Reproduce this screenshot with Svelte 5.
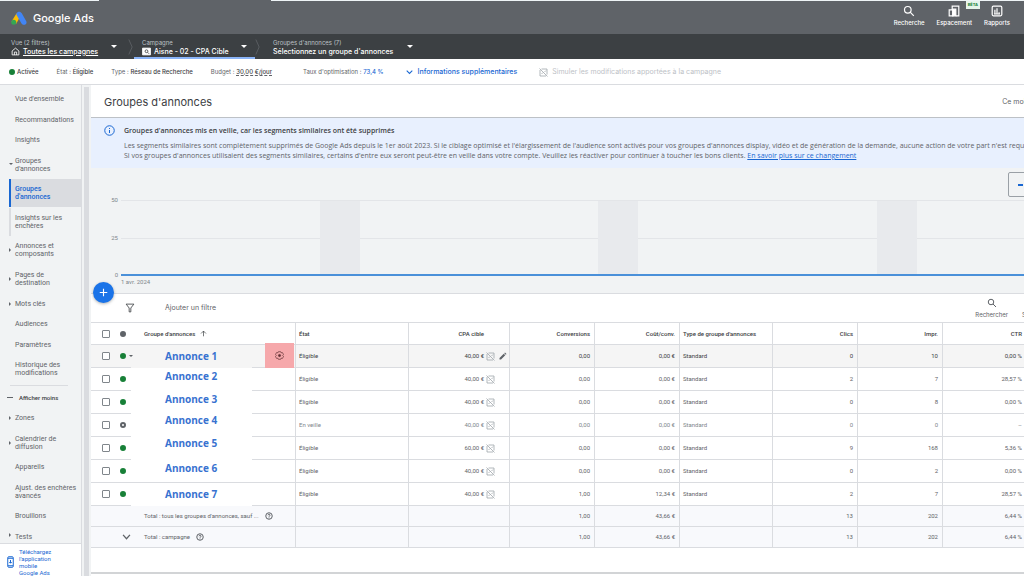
<script>
  let rows = $state([
    { name: "Annonce 1", state: "Éligible", cpa: "40,00 €", conv: "0,00", cost: "0,00 €", clicks: "0", impr: "10", ctr: "0,00 %", align: "mid", checked: false },
    { name: "Annonce 2", state: "Éligible", cpa: "40,00 €", conv: "0,00", cost: "0,00 €", clicks: "2", impr: "7", ctr: "28,57 %", align: "top", checked: false },
    { name: "Annonce 3", state: "Éligible", cpa: "40,00 €", conv: "0,00", cost: "0,00 €", clicks: "0", impr: "8", ctr: "0,00 %", align: "top", checked: false },
    { name: "Annonce 4", state: "En veille", cpa: "40,00 €", conv: "0,00", cost: "0,00 €", clicks: "0", impr: "0", ctr: "–", align: "high", checked: false },
    { name: "Annonce 5", state: "Éligible", cpa: "60,00 €", conv: "0,00", cost: "0,00 €", clicks: "9", impr: "168", ctr: "5,36 %", align: "high", checked: false },
    { name: "Annonce 6", state: "Éligible", cpa: "40,00 €", conv: "0,00", cost: "0,00 €", clicks: "0", impr: "2", ctr: "0,00 %", align: "top", checked: false },
    { name: "Annonce 7", state: "Éligible", cpa: "40,00 €", conv: "1,00", cost: "12,34 €", clicks: "2", impr: "7", ctr: "28,57 %", align: "mid", checked: false },
  ]);

  const totals = [
    { label: "Total : tous les groupes d'annonces, sauf ...", chevron: false },
    { label: "Total : campagne", chevron: true },
  ];

  const menu = [
    { label: ["Vue d'ensemble"] },
    { label: ["Recommandations"] },
    { label: ["Insights"] },
    { label: ["Groupes", "d'annonces"], arrow: "down" },
    { label: ["Groupes", "d'annonces"], sub: true, active: true },
    { label: ["Insights sur les", "enchères"], sub: true },
    { label: ["Annonces et", "composants"], arrow: "right" },
    { label: ["Pages de", "destination"], arrow: "right" },
    { label: ["Mots clés"], arrow: "right" },
    { label: ["Audiences"] },
    { label: ["Paramètres"] },
    { label: ["Historique des", "modifications"] },
    { label: ["Afficher moins"], less: true },
    { label: ["Zones"], arrow: "right" },
    { label: ["Calendrier de", "diffusion"], arrow: "right" },
    { label: ["Appareils"] },
    { label: ["Ajust. des enchères", "avancés"] },
    { label: ["Brouillons"] },
    { label: ["Tests"], arrow: "right" },
  ];

  // widths of the plain and shaded (weekend) parts of the plot
  const bands = [199, 40, 238, 40, 239, 40, 107];

  let allChecked = $state(false);

  function toggleAll() {
    rows.forEach((row) => {
      row.checked = allChecked;
    });
  }
</script>

{#snippet simulator()}
  <svg class="sim" viewBox="0 0 18 18" aria-hidden="true">
    <path d="M5 2h11v11M2 4v12h12M1 1l16 16M5 12l3-3M11 8l3-3" />
  </svg>
{/snippet}

{#snippet loupe()}
  <svg class="loupe" viewBox="0 0 20 20" aria-hidden="true">
    <circle cx="8" cy="8" r="5.5" />
    <path d="M12 12l6 6" />
  </svg>
{/snippet}

{#snippet help()}
  <svg class="help" viewBox="0 0 16 16" aria-hidden="true">
    <circle cx="8" cy="8" r="6.5" />
    <path d="M6 6.5c0-2.700 4-2.700 4 0 0 1.500-2 1.500-2 3M8 11v1.500" />
  </svg>
{/snippet}

<div class="app">
  <div class="strip"><span></span></div>
  <header>
    <a class="logo" href="#home">
      <svg viewBox="0 0 32 28" aria-hidden="true">
        <path d="M11 5l8 5-9 16-9-5z" fill="#fbbc04" />
        <path d="M11 4.500c2-4 8-4.500 10.500 0l9 16c3 6-6 10-9.500 4.500l-9-15.500c-1-1.500-1.500-3.500-1-5z" fill="#4285f4" />
        <circle cx="5.500" cy="22.500" r="5" fill="#34a853" />
      </svg>
      <span>Google Ads</span>
    </a>
    <div class="tools">
      <button>
        {@render loupe()}
        Recherche
      </button>
      <button class="with-badge">
        <svg viewBox="0 0 20 20" aria-hidden="true">
          <path d="M7 7V2h11v16h-5M2 8h6v10H2z" />
          <path d="M8 7h5v11H8z" fill="#fff" />
        </svg>
        Espacement
        <span class="badge">BÊTA</span>
      </button>
      <button>
        <svg viewBox="0 0 20 20" aria-hidden="true">
          <rect x="2" y="2" width="16" height="16" rx="2" />
          <path d="M6.500 15V8M10 15V5.500M13.500 15v-3M5 15h10" />
        </svg>
        Rapports
      </button>
    </div>
  </header>

  <nav class="crumbs">
    <a class="crumb first" href="#vue">
      <span class="small">Vue (2 filtres)</span>
      <span class="big">
        <svg viewBox="0 0 16 16" aria-hidden="true"><path d="M2 7l6-5 6 5v7H2zM6 14V9h4v5" /></svg>
        <u>Toutes les campagnes</u>
      </span>
      <i class="caret"></i>
    </a>
    <svg class="sep" viewBox="0 0 6 20" aria-hidden="true"><path d="M1 1l4 9-4 9" /></svg>
    <a class="crumb current" href="#campagne">
      <span class="small">Campagne</span>
      <span class="big">
        <svg viewBox="0 0 16 16" aria-hidden="true"><path d="M1 2h14v12H1z" fill="#fff" /><g stroke="#3c4043"><circle cx="8" cy="7.500" r="2.500" /><path d="M10 9.500l2.500 2.500" /></g></svg>
        Aisne - 02 - CPA Cible
      </span>
      <i class="caret"></i>
    </a>
    <svg class="sep" viewBox="0 0 6 20" aria-hidden="true"><path d="M1 1l4 9-4 9" /></svg>
    <a class="crumb last" href="#groupes">
      <span class="small">Groupes d'annonces (7)</span>
      <span class="big">Sélectionnez un groupe d'annonces</span>
      <i class="caret"></i>
    </a>
  </nav>

  <div class="status">
    <span class="enabled"><i class="dot on"></i>Activée</span>
    <span>État : <b>Éligible</b></span>
    <span>Type : <b>Réseau de Recherche</b></span>
    <span>Budget : <b class="dashed">30,00 €/jour</b></span>
    <span class="optim">Taux d'optimisation : <a href="#optimisation">73,4 %</a></span>
    <button class="more">
      <svg viewBox="0 0 10 8" aria-hidden="true"><path d="M1 2l4 4 4-4" /></svg>
      Informations supplémentaires
    </button>
    <button class="simulate" disabled>
      {@render simulator()}
      Simuler les modifications apportées à la campagne
    </button>
  </div>

  <div class="body">
    <aside>
      <nav class="menu">
        {#each menu as item}
          {#if item.less}
            <hr />
          {/if}
          <a href="#menu" class:sub={item.sub} class:active={item.active} class:less={item.less}>
            {#if item.less}
              <i class="minus"></i>
            {:else if item.arrow}
              <i class="arrow {item.arrow}"></i>
            {/if}
            <span>
              {#each item.label as line, i}{#if i > 0}<br />{/if}{line}{/each}
            </span>
          </a>
        {/each}
      </nav>
      <a class="download" href="#mobile">
        <svg viewBox="0 0 14 24" aria-hidden="true">
          <rect x="1.500" y="1.500" width="11" height="21" rx="2" />
          <path d="M2 4.500h10M2 19.500h10M7 8v6M4.500 12L7 14.500 9.500 12" />
        </svg>
        <span>Téléchargez<br />l'application<br />mobile<br />Google Ads</span>
      </a>
    </aside>
    <div class="gutter"></div>

    <main>
      <div class="title">
        <h1>Groupes d'annonces</h1>
        <button class="period">Ce mois-ci</button>
      </div>

      <section class="notice">
        <svg viewBox="0 0 22 22" aria-hidden="true">
          <circle cx="11" cy="11" r="9.500" />
          <path d="M11 10v6M11 6v2" />
        </svg>
        <div>
          <h2>Groupes d'annonces mis en veille, car les segments similaires ont été supprimés</h2>
          <p>Les segments similaires sont complètement supprimés de Google Ads depuis le 1er août 2023. Si le ciblage optimisé et l'élargissement de l'audience sont activés pour vos groupes d'annonces display, vidéo et de génération de la demande, aucune action de votre part n'est requise.</p>
          <p>Si vos groupes d'annonces utilisaient des segments similaires, certains d'entre eux seront peut-être en veille dans votre compte. Veuillez les réactiver pour continuer à toucher les bons clients. <a href="#changement">En savoir plus sur ce changement</a></p>
        </div>
      </section>

      <section class="chart">
        <div class="chart-head">
          <button aria-label="Réduire le graphique"><i></i></button>
        </div>
        <div class="chart-body">
          <div class="axis"><span>50</span><span>25</span><span>0</span></div>
          <div class="plot">
            {#each bands as width, i}
              <div class:shade={i % 2 === 1} style="flex-grow: {width}"></div>
            {/each}
          </div>
        </div>
        <div class="date">1 avr. 2024</div>
        <button class="add" aria-label="Ajouter">
          <svg viewBox="0 0 12 12" aria-hidden="true"><path d="M6 1v10M1 6h10" /></svg>
        </button>
      </section>

      <div class="filters">
        <button class="add-filter">
          <svg viewBox="0 0 18 18" aria-hidden="true"><path d="M2 2h14l-5.500 7v7h-3V9z" /></svg>
          Ajouter un filtre
        </button>
        <button class="find">
          {@render loupe()}
          Rechercher
        </button>
        <button class="segment">Segmenter</button>
      </div>

      <table>
        <colgroup>
          <col class="c-check" /><col class="c-dot" /><col class="c-name" /><col class="c-gear" />
          <col class="c-state" /><col class="c-cpa" /><col class="c-num" /><col class="c-num" />
          <col class="c-type" /><col class="c-num" /><col class="c-num" /><col class="c-ctr" />
        </colgroup>
        <thead>
          <tr>
            <th class="check"><input type="checkbox" aria-label="Tout sélectionner" bind:checked={allChecked} onchange={toggleAll} /></th>
            <th class="mark"><i class="dot all"></i></th>
            <th class="name" colspan="2">
              Groupe d'annonces
              <svg viewBox="0 0 10 10" aria-hidden="true"><path d="M5 9V1.500M1.500 5L5 1.500 8.500 5" /></svg>
            </th>
            <th class="line">État</th>
            <th class="line num cpa">CPA cible</th>
            <th class="line num">Conversions</th>
            <th class="line num">Coût/conv.</th>
            <th class="line">Type de groupe d'annonces</th>
            <th class="line num">Clics</th>
            <th class="line num">Impr.</th>
            <th class="line num ctr">CTR</th>
          </tr>
        </thead>
        <tbody>
          {#each rows as row, i}
            <tr class:hover={i === 0} class:paused={row.state === "En veille"}>
              <td class="check"><input type="checkbox" aria-label={row.name} bind:checked={row.checked} /></td>
              <td class="mark">
                <i class="dot" class:on={row.state === "Éligible"}></i>
                {#if i === 0}<i class="open"></i>{/if}
              </td>
              <td class="name {row.align}" class:ruled={i === 5}><a href="#annonce">{row.name}</a></td>
              <td class="gear">
                {#if i === 0}
                  <button aria-label="Paramètres du groupe">
                    <svg viewBox="0 0 20 20" aria-hidden="true">
                      <path d="M7.500 1.500h5l1 2.500 3-.500 2.500 4.500-2 2 2 2-2.500 4.500-3-.500-1 2.500h-5l-1-2.500-3 .500L1 12l2-2-2-2 2.500-4.500 3 .500z" />
                      <circle cx="10" cy="10" r="2.500" fill="#5f2f33" />
                    </svg>
                  </button>
                {/if}
              </td>
              <td class="line">{row.state}</td>
              <td class="line num cpa">
                <span>{row.cpa}{@render simulator()}</span>
                {#if i === 0}
                  <svg class="pencil" viewBox="0 0 16 16" aria-hidden="true"><path d="M1 12l8.500-8.500 3 3L4 15H1zM10.500 2.500L12 1l3 3-1.500 1.500z" /></svg>
                {/if}
              </td>
              <td class="line num">{row.conv}</td>
              <td class="line num">{row.cost}</td>
              <td class="line">Standard</td>
              <td class="line num">{row.clicks}</td>
              <td class="line num">{row.impr}</td>
              <td class="line num ctr">{row.ctr}</td>
            </tr>
          {/each}
        </tbody>
        <tfoot>
          {#each totals as total}
            <tr>
              <td></td>
              <td class="mark">
                {#if total.chevron}
                  <svg class="chevron" viewBox="0 0 10 7" aria-hidden="true"><path d="M1 1l4 4.500L9 1" /></svg>
                {/if}
              </td>
              <td class="name" colspan="2">{total.label} {@render help()}</td>
              <td class="line"></td>
              <td class="line"></td>
              <td class="line num">1,00</td>
              <td class="line num">43,66 €</td>
              <td class="line"></td>
              <td class="line num">13</td>
              <td class="line num">202</td>
              <td class="line num ctr">6,44 %</td>
            </tr>
          {/each}
        </tfoot>
      </table>
      <div class="end"></div>
    </main>
  </div>
</div>

<style>
  .app {
    display: flex;
    flex-direction: column;
    height: 100vh;
    overflow: hidden;
    background: #f1f3f4;
    color: #5f6368;
    font-family: Roboto, "Liberation Sans", sans-serif;
    font-size: 7px;
    line-height: 8px;
  }
  .app * {
    box-sizing: border-box;
  }
  header,
  .crumbs,
  .status,
  .title,
  .filters {
    font-family: Inter, Roboto, sans-serif;
  }
  svg {
    fill: none;
    stroke: currentColor;
    stroke-width: 1.5;
    flex: none;
  }
  a {
    color: inherit;
    text-decoration: none;
  }
  button {
    margin: 0;
    padding: 0;
    border: 0;
    background: none;
    color: inherit;
    font: inherit;
    white-space: nowrap;
    cursor: pointer;
  }
  h1,
  h2,
  p {
    margin: 0;
  }

  /* top bar */
  .strip {
    height: 1px;
    background: #eef4f6;
    padding-left: 99px;
  }
  .strip span {
    display: block;
    width: 172px;
    height: 1px;
    background: #5f6368;
  }
  header {
    display: flex;
    justify-content: space-between;
    height: 33px;
    flex: none;
    padding: 0 14px 0 11px;
    background: #5f6368;
    color: #fff;
  }
  .logo {
    display: flex;
    align-items: center;
    gap: 6px;
    font-size: 11px;
    line-height: 16px;
    font-weight: 500;
  }
  .logo svg {
    width: 16px;
    height: 14px;
    stroke: none;
  }
  .tools {
    display: flex;
    gap: 12px;
    padding-top: 4px;
    font-size: 6px;
    font-weight: 500;
  }
  .tools button {
    display: flex;
    flex-direction: column;
    align-items: center;
    align-self: flex-start;
    gap: 2px;
  }
  .tools svg {
    width: 12px;
    height: 12px;
    stroke-width: 2;
  }
  .with-badge {
    position: relative;
  }
  .badge {
    position: absolute;
    top: -4px;
    right: -8px;
    padding: 0 2px;
    background: #e6f4ea;
    color: #188038;
    font-size: 4px;
    font-weight: 700;
  }

  /* breadcrumb */
  .crumbs {
    display: flex;
    align-items: center;
    height: 25px;
    flex: none;
    background: #3c4043;
    color: #fff;
  }
  .crumb {
    position: relative;
    display: flex;
    flex-direction: column;
    justify-content: center;
    align-self: stretch;
    padding-top: 1px;
  }
  .crumb.first {
    width: 128px;
    padding-left: 11px;
  }
  .crumb.current {
    width: 121px;
    padding-left: 8px;
    margin-left: 1px;
    border-bottom: 2px solid #8ab4f8;
    padding-top: 3px;
  }
  .crumb.last {
    width: 158px;
    padding-left: 13px;
  }
  .crumb .small {
    color: #bdc1c6;
    font-size: 6px;
  }
  .crumb .big {
    display: flex;
    align-items: center;
    gap: 3px;
    line-height: 9px;
    font-weight: 500;
    white-space: nowrap;
  }
  .crumb svg {
    width: 9px;
    height: 9px;
  }
  .caret {
    position: absolute;
    top: 11px;
    right: 11px;
    border: 3px solid transparent;
    border-top-color: #fff;
    border-bottom: 0;
  }
  .current .caret {
    right: 8px;
  }
  .last .caret {
    right: 5px;
  }
  .sep {
    width: 5px;
    height: 18px;
    stroke: #5f6368;
    stroke-width: 1;
  }

  /* campaign status */
  .status {
    display: flex;
    align-items: center;
    gap: 18px;
    height: 26px;
    flex: none;
    padding: 1px 0 0 9px;
    border-bottom: 1px solid #dadce0;
    background: #fff;
    font-size: 6px;
    white-space: nowrap;
  }
  .status b {
    color: #3c4043;
    font-weight: 500;
  }
  .status .enabled {
    display: flex;
    align-items: center;
    gap: 2px;
    color: #3c4043;
    font-weight: 500;
  }
  .status .dashed {
    border-bottom: 1px dashed #5f6368;
  }
  .optim {
    margin-left: 13px;
  }
  .optim a,
  .more {
    color: #1967d2;
    font-weight: 500;
  }
  .more,
  .simulate {
    display: flex;
    align-items: center;
    gap: 5px;
    font-size: 7px;
  }
  .more {
    margin-left: 4px;
  }
  .more svg {
    width: 7px;
    height: 6px;
  }
  .simulate {
    gap: 4px;
    margin-left: 4px;
    color: #bdc1c6;
    cursor: default;
  }
  .dot {
    display: inline-block;
    width: 6px;
    height: 6px;
    border: 2px solid #5f6368;
    border-radius: 50%;
  }
  .dot.on {
    background: #188038;
    border-color: #188038;
  }
  .dot.all {
    background: #5f6368;
  }
  .sim {
    width: 9px;
    height: 9px;
    stroke: #9aa0a6;
  }

  /* side menu */
  .body {
    display: flex;
    flex: 1;
    min-height: 0;
  }
  aside {
    display: flex;
    flex-direction: column;
    width: 82px;
    flex: none;
    border-right: 1px solid #dadce0;
  }
  .menu {
    display: flex;
    flex-direction: column;
    justify-content: space-between;
    flex: 1;
    padding-top: 4px;
  }
  .menu a {
    position: relative;
    padding: 6px 0 6px 15px;
    white-space: nowrap;
  }
  .menu a:last-child {
    padding-bottom: 2px;
  }
  .menu a span {
    display: block;
  }
  .menu .sub {
    margin-left: 9px;
    padding-left: 4px;
    border-left: 2px solid #dadce0;
  }
  .menu .active {
    background: #dadce0;
    border-color: #1967d2;
    color: #1967d2;
    font-weight: 500;
  }
  .menu .less {
    padding-left: 19px;
    color: #3c4043;
    font-size: 6px;
    font-weight: 500;
  }
  .menu hr {
    width: 58px;
    margin: 1px 0 1px 10px;
    border: 0;
    border-top: 1px solid #dadce0;
  }
  .minus {
    position: absolute;
    top: 9px;
    left: 7px;
    width: 6px;
    height: 1px;
    background: #5f6368;
  }
  .arrow {
    position: absolute;
    top: 50%;
    left: 9px;
    margin-top: -2px;
    border: 2px solid transparent;
  }
  .arrow.down {
    border-top-color: #5f6368;
    border-bottom: 0;
  }
  .arrow.right {
    border-left-color: #5f6368;
    border-right: 0;
  }
  .download {
    display: flex;
    align-items: center;
    gap: 5px;
    height: 33px;
    flex: none;
    padding: 4px 0 0 7px;
    overflow: hidden;
    border-top: 1px solid #dadce0;
    background: #fff;
    color: #1967d2;
    font-size: 6px;
    line-height: 7px;
  }
  .download svg {
    width: 7px;
    height: 12px;
    stroke-width: 2;
  }
  .gutter {
    width: 9px;
    flex: none;
    margin-top: 2px;
    border: solid #f1f3f4;
    border-width: 0 2px;
    background: #dadce0;
  }

  main {
    display: flex;
    flex-direction: column;
    flex: 1;
    min-width: 0;
    overflow: hidden;
    background: #fff;
  }
  .title {
    display: flex;
    align-items: center;
    justify-content: space-between;
    height: 33px;
    flex: none;
    padding: 2px 0 0 13px;
    border-bottom: 1px solid #bdc1c6;
  }
  h1 {
    color: #3c4043;
    font-size: 11px;
    line-height: 16px;
    font-weight: 400;
  }
  .period {
    margin-right: -14px;
  }

  .notice {
    display: flex;
    gap: 9px;
    flex: none;
    padding: 7px 0 7px 13px;
    background: #e8f0fe;
    font-family: "Open Sans", Roboto, sans-serif;
    white-space: nowrap;
  }
  .notice svg {
    width: 11px;
    height: 11px;
    stroke: #1967d2;
    stroke-width: 2;
  }
  .notice h2 {
    padding: 1px 0 6px;
    color: #3c4043;
    font-size: 7px;
    line-height: 9px;
    font-weight: 600;
  }
  .notice p {
    line-height: 10px;
  }
  .notice a {
    color: #1967d2;
    text-decoration: underline;
  }

  /* chart */
  .chart {
    position: relative;
    flex: none;
    padding-bottom: 7px;
    border-bottom: 1px solid #dadce0;
    background: #f1f3f4;
    color: #80868b;
    font-size: 6px;
  }
  .chart-head {
    display: flex;
    justify-content: flex-end;
    height: 32px;
    padding-top: 4px;
  }
  .chart-head button {
    width: 40px;
    height: 25px;
    margin-right: -24px;
    padding-left: 9px;
    border: 1px solid #9aa0a6;
    border-radius: 2px;
    text-align: left;
  }
  .chart-head i {
    display: block;
    width: 5px;
    height: 2px;
    background: #1967d2;
  }
  .chart-body {
    display: flex;
    gap: 3px;
  }
  .axis {
    display: flex;
    flex-direction: column;
    justify-content: space-between;
    width: 27px;
    margin: -4px 0 -3px;
    text-align: right;
  }
  .plot {
    display: flex;
    flex: 1;
    height: 76px;
    border-top: 1px solid #e3e5e8;
    border-bottom: 2px solid #4a90d9;
    background: linear-gradient(#e3e5e8, #e3e5e8) 0 37px / 100% 1px no-repeat;
  }
  .plot div {
    flex-basis: 0;
  }
  .plot .shade {
    background: #e8eaed;
  }
  .date {
    padding: 2px 0 0 30px;
  }
  .add {
    position: absolute;
    bottom: -10px;
    left: 2px;
    display: flex;
    align-items: center;
    justify-content: center;
    width: 21px;
    height: 21px;
    border-radius: 50%;
    background: #1a73e8;
    box-shadow: 0 1px 3px rgba(60, 64, 67, 0.4);
    color: #fff;
  }
  .add svg {
    width: 9px;
    height: 9px;
  }

  /* filter bar */
  .filters {
    display: flex;
    align-items: center;
    height: 28px;
    flex: none;
  }
  .add-filter {
    display: flex;
    align-items: center;
    gap: 30px;
    margin: 0 auto 0 34px;
  }
  .add-filter svg {
    width: 10px;
    height: 10px;
    stroke: #3c4043;
  }
  .find {
    display: flex;
    flex-direction: column;
    align-items: center;
    gap: 3px;
    font-size: 6px;
  }
  .find svg {
    width: 10px;
    height: 10px;
    stroke-width: 2;
  }
  .segment {
    align-self: flex-end;
    margin: 0 -29px 3px 14px;
    font-size: 6px;
  }

  /* table */
  table {
    width: 100%;
    flex: none;
    table-layout: fixed;
    border-collapse: separate;
    border-spacing: 0;
    border-top: 1px solid #dadce0;
    font-size: 6px;
    white-space: nowrap;
  }
  .c-check {
    width: 24px;
  }
  .c-dot {
    width: 16px;
  }
  .c-name {
    width: 121px;
  }
  .c-gear {
    width: 43px;
  }
  .c-state {
    width: 113px;
  }
  .c-cpa {
    width: 101px;
  }
  .c-num {
    width: 85px;
  }
  .c-type {
    width: 93px;
  }
  .c-ctr {
    width: 82px;
  }
  th,
  td {
    height: 23px;
    padding: 0 4px 0 3px;
    border-bottom: 1px solid #dadce0;
    text-align: left;
    vertical-align: middle;
  }
  th {
    height: 22px;
    color: #3c4043;
    font-weight: 500;
  }
  .line {
    border-left: 1px solid #dadce0;
  }
  .num {
    text-align: right;
  }
  .ctr {
    padding-right: 2px;
  }
  .cpa {
    position: relative;
    padding-right: 25px;
  }
  td.cpa {
    padding-right: 14px;
  }
  .cpa span {
    display: flex;
    align-items: center;
    justify-content: flex-end;
    gap: 2px;
  }
  .pencil {
    position: absolute;
    top: 7px;
    right: 2px;
    width: 8px;
    height: 8px;
    fill: #5f6368;
    stroke: none;
  }
  .check {
    padding: 0 0 0 11px;
  }
  input {
    display: block;
    width: 8px;
    height: 8px;
    margin: 0;
    appearance: none;
    border: 1px solid #80868b;
    border-radius: 1px;
    background: #fff;
  }
  input:checked {
    border-color: #1a73e8;
    background: #1a73e8;
  }
  .mark {
    position: relative;
    padding: 0 0 0 5px;
  }
  .mark .dot {
    display: block;
  }
  .open {
    position: absolute;
    top: 10px;
    left: 14px;
    border: 2px solid transparent;
    border-top-color: #5f6368;
    border-bottom: 0;
  }
  .chevron {
    display: block;
    width: 9px;
    height: 6px;
    margin-left: 2px;
  }
  .name {
    padding-left: 13px;
  }
  .name svg {
    width: 7px;
    height: 7px;
    margin-left: 3px;
    vertical-align: middle;
    stroke-width: 1;
  }
  tbody .name {
    padding-left: 34px;
    border-bottom-color: transparent;
    font-family: "Open Sans", "Noto Sans", sans-serif;
    font-size: 10px;
    line-height: 16px;
    font-weight: 700;
  }
  .name a {
    color: #3872d0;
  }
  tbody .name.top {
    vertical-align: top;
  }
  tbody .name.high {
    line-height: 12px;
    vertical-align: top;
  }
  tbody .name.ruled {
    border-bottom-color: #dadce0;
  }
  .hover {
    background: #f5f5f5;
  }
  .hover td {
    color: #3c4043;
  }
  .paused {
    color: #80868b;
  }
  .gear {
    position: relative;
  }
  .gear button {
    position: absolute;
    top: -2px;
    right: 1px;
    bottom: -1px;
    display: flex;
    align-items: center;
    justify-content: center;
    width: 29px;
    background: #f6a8ab;
    color: #5f2f33;
  }
  .gear svg {
    width: 9px;
    height: 9px;
  }
  tfoot td {
    height: 21px;
    background: #f8f9fc;
  }
  tfoot .name .help {
    width: 8px;
    height: 8px;
    margin-left: 5px;
    stroke-width: 2;
  }
  .end {
    flex: 1;
    margin-bottom: 2px;
    border-bottom: 2px solid #d2d4d6;
  }
</style>
